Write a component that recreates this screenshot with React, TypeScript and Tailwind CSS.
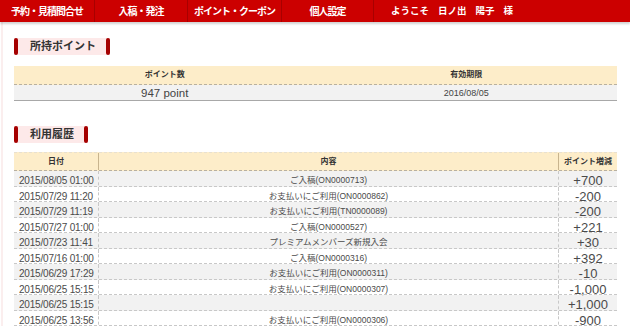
import React from 'react';

const navItems = [
  { label: '予約・見積問合せ', width: 'w-[95px]' },
  { label: '入稿・発注', width: 'w-[93px]' },
  { label: 'ポイント・クーポン', width: 'w-[94px]' },
  { label: '個人設定', width: 'w-[92px]' },
];

const history = [
  { date: '2015/08/05 01:00', detail: 'ご入稿(ON0000713)', point: '+700' },
  { date: '2015/07/29 11:20', detail: 'お支払いにご利用(ON0000862)', point: '-200' },
  { date: '2015/07/29 11:19', detail: 'お支払いにご利用(TN0000089)', point: '-200' },
  { date: '2015/07/27 01:00', detail: 'ご入稿(ON0000527)', point: '+221' },
  { date: '2015/07/23 11:41', detail: 'プレミアムメンバーズ新規入会', point: '+30' },
  { date: '2015/07/16 01:00', detail: 'ご入稿(ON0000316)', point: '+392' },
  { date: '2015/06/29 17:29', detail: 'お支払いにご利用(ON0000311)', point: '-10' },
  { date: '2015/06/25 15:15', detail: 'お支払いにご利用(ON0000307)', point: '-1,000' },
  { date: '2015/06/25 15:15', detail: '', point: '+1,000' },
  { date: '2015/06/25 13:56', detail: 'お支払いにご利用(ON0000306)', point: '-900' },
  { date: '2015/04/24 01:00', detail: 'ご入稿(ON0000269)', point: '+380' },
];

const font = "font-['Liberation_Sans','Noto_Sans_CJK_JP',sans-serif]";

function SectionTitle({ title, width }: { title: string; width: string }) {
  return (
    <div className={`flex h-[17px] ${width} bg-[#fde9e9]`}>
      <div className="w-[4px] rounded-[2px] bg-[#a50000]" />
      <div className="flex-1 pl-[12px] text-[11px] leading-[17px] font-bold text-[#333] whitespace-nowrap">{title}</div>
      <div className="w-[4px] rounded-[2px] bg-[#a50000]" />
    </div>
  );
}

export default function App() {
  return (
    <div className={`w-[630px] h-[326px] overflow-hidden bg-white ${font}`}>
      {/* Global Nav */}
      <div className="flex h-[22px] bg-[#cc0000] shadow-[0_2px_2px_rgba(0,0,0,0.18)] relative z-10">
        {navItems.map((item) => (
          <div
            key={item.label}
            className={`${item.width} flex items-center justify-center border-r border-[#a80000] text-[10px] tracking-[-1px] font-bold text-white whitespace-nowrap`}
          >
            {item.label}
          </div>
        ))}
        <div className="flex items-center pl-[17px] text-[9.5px] font-bold text-white space-x-[9px] whitespace-nowrap">
          <span>ようこそ</span>
          <span>日ノ出</span>
          <span>陽子</span>
          <span>様</span>
        </div>
      </div>

      <div className="border-l-[2px] border-[#fbeeee] ml-[1px] pl-[11px] pt-[16px]">
        {/* 所持ポイント */}
        <SectionTitle title="所持ポイント" width="w-[96px]" />

        <div className="mt-[11px] w-[603px]">
          <div className="grid grid-cols-2 h-[19px] bg-[#fdedc9] border-b border-dashed border-[#b8b0a0] text-[8px] font-bold text-[#333]">
            <div className="flex items-center justify-center">ポイント数</div>
            <div className="flex items-center justify-center">有効期限</div>
          </div>
          <div className="grid grid-cols-2 h-[16px] bg-[#f2f2f2] border-b border-[#a8a8a8] text-[#444]">
            <div className="flex items-center justify-center text-[11.5px]">947 point</div>
            <div className="flex items-center justify-center text-[9px]">2016/08/05</div>
          </div>
        </div>

        {/* 利用履歴 */}
        <div className="mt-[25px]">
          <SectionTitle title="利用履歴" width="w-[74px]" />
        </div>

        <div className="mt-[9px] w-[603px]">
          <div className="grid grid-cols-[85px_460px_58px] h-[19px] bg-[#fdedc9] border-t border-[#e8e0d0] border-b border-dashed border-b-[#b8b0a0] text-[8px] font-bold text-[#333]">
            <div className="flex items-center justify-center border-r border-[#c8b48e]">日付</div>
            <div className="flex items-center justify-center border-r border-[#c8b48e]">内容</div>
            <div className="flex items-center justify-center whitespace-nowrap">ポイント増減</div>
          </div>
          {history.map((row, i) => (
            <div
              key={i}
              className={`grid grid-cols-[85px_460px_58px] h-[15.5px] border-b border-dashed border-[#c8c8c8] text-[#4a4a4a] ${
                i % 2 === 0 ? 'bg-[#f2f2f2]' : 'bg-white'
              }`}
            >
              <div className="flex items-center pl-[5px] text-[10px] tracking-[-0.2px] whitespace-nowrap border-r border-dashed border-[#c8c8c8]">
                {row.date}
              </div>
              <div className="flex items-center justify-center text-[8.5px] whitespace-nowrap border-r border-dashed border-[#c8c8c8]">
                {row.detail}
              </div>
              <div className="flex items-center justify-center text-[13px] whitespace-nowrap">{row.point}</div>
            </div>
          ))}
        </div>
      </div>
    </div>
  );
}
